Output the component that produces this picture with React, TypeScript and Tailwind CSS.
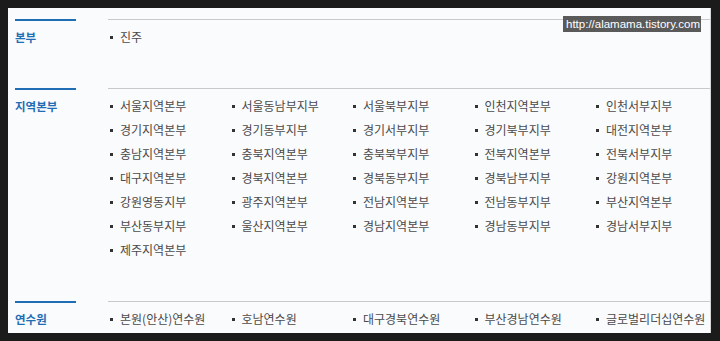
const SECTIONS = [
  { title: "본부", items: ["진주"] },
  {
    title: "지역본부",
    items: [
      "서울지역본부", "서울동남부지부", "서울북부지부", "인천지역본부", "인천서부지부",
      "경기지역본부", "경기동부지부", "경기서부지부", "경기북부지부", "대전지역본부",
      "충남지역본부", "충북지역본부", "충북북부지부", "전북지역본부", "전북서부지부",
      "대구지역본부", "경북지역본부", "경북동부지부", "경북남부지부", "강원지역본부",
      "강원영동지부", "광주지역본부", "전남지역본부", "전남동부지부", "부산지역본부",
      "부산동부지부", "울산지역본부", "경남지역본부", "경남동부지부", "경남서부지부",
      "제주지역본부",
    ],
  },
  {
    title: "연수원",
    items: ["본원(안산)연수원", "호남연수원", "대구경북연수원", "부산경남연수원", "글로벌리더십연수원"],
  },
];

export default function App() {
  return (
    <div className="h-[341px] w-[720px] overflow-hidden bg-[#1b1b1b] pl-[8px] pr-[9px] pt-[8px] pb-[8px]">
      <div
        className="relative h-[325px] overflow-hidden border-r border-[#d6d6d6] bg-[#fafbfd] pt-[11px]"
        style={{ fontFamily: '"Noto Sans CJK KR", "Noto Sans", sans-serif' }}
      >
        {SECTIONS.map((s) => (
          <div key={s.title} className="flex pb-[39px]">
            <div className="ml-[7px] w-[61px] shrink-0 border-t-2 border-[#1f6db5] pt-[4px]">
              <div className="h-[24px] text-[11.5px] font-bold leading-[24px] text-[#1f6db5]">{s.title}</div>
            </div>
            <div className="ml-[32px] flex-1 border-t border-[#c9c9c9] pt-[5px]">
              <ul className="grid grid-cols-[repeat(5,121.5px)]">
                {s.items.map((it) => (
                  <li key={it} className="flex h-[24px] items-center pl-[2px] text-[12px] leading-[24px] text-[#4a4a4a]">
                    <span className="mr-[7px] h-[3px] w-[3px] shrink-0 bg-[#333]" />
                    {it}
                  </li>
                ))}
              </ul>
            </div>
          </div>
        ))}
        <div
          className="absolute left-[555px] top-[8px] h-[16px] w-[138px] bg-[#5a5a5a] pl-[3px] text-[11.5px] leading-[16px] text-white"
          style={{ fontFamily: '"Liberation Sans", Arial, sans-serif' }}
        >
          http://alamama.tistory.com
        </div>
      </div>
    </div>
  );
}
